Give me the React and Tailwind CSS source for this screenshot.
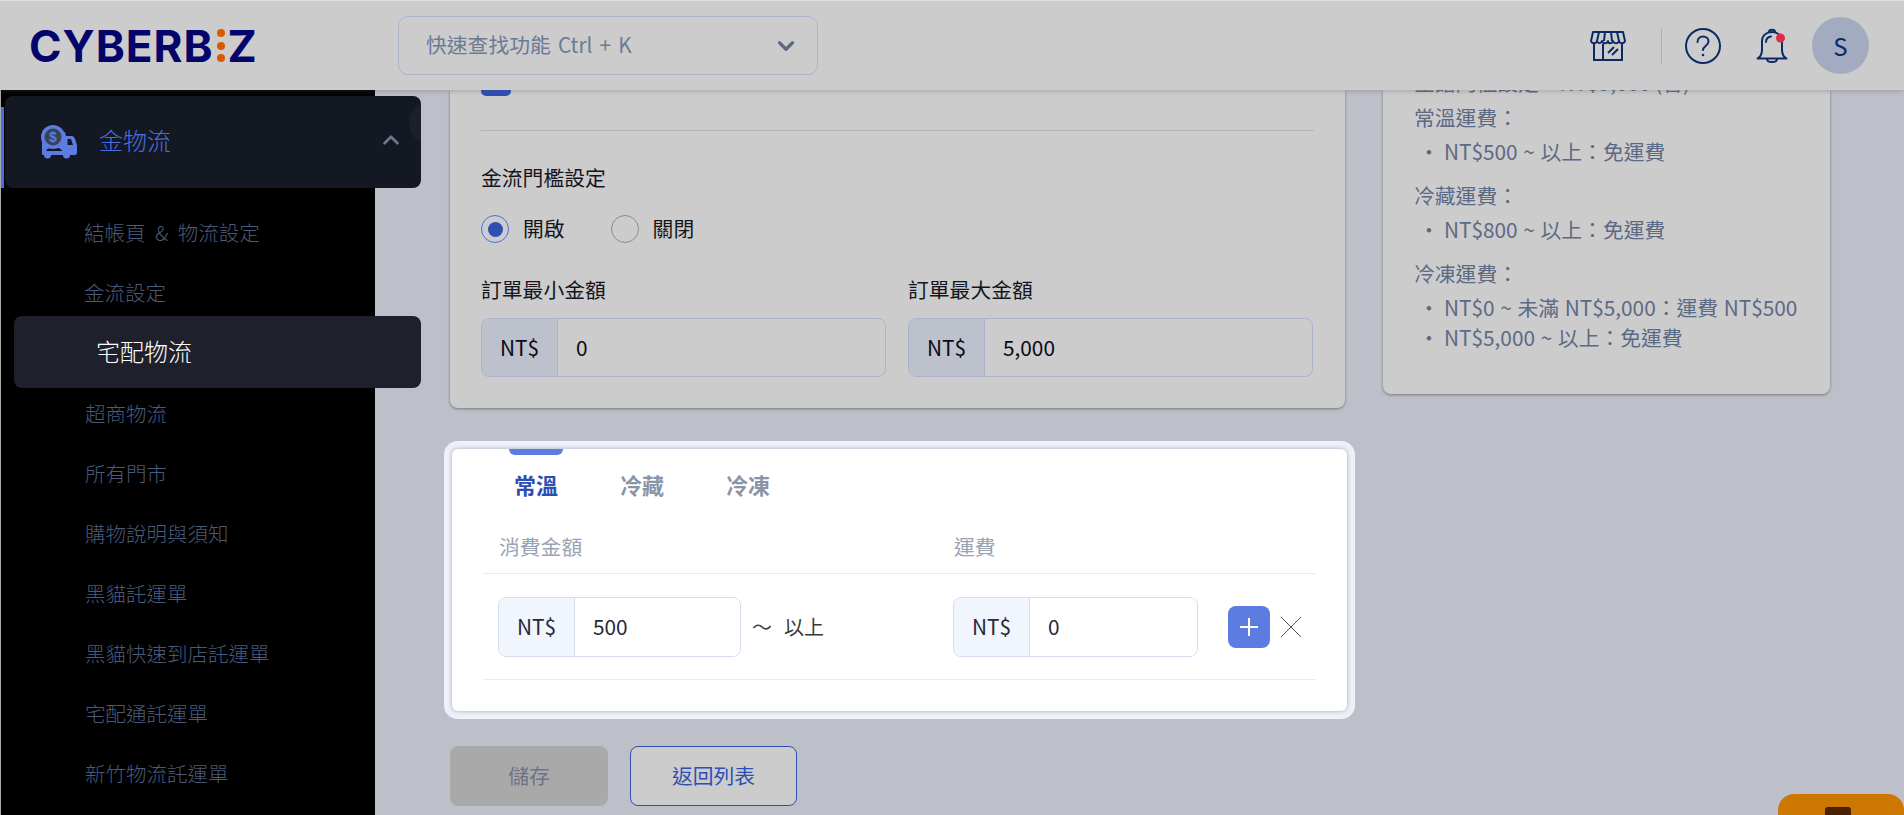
import React from "react";
import { ChevronDown, ChevronUp } from "lucide-react";

const sideItems = ["結帳頁 & 物流設定", "金流設定"];
const sideItemsBelow = [
  "超商物流",
  "所有門市",
  "購物說明與須知",
  "黑貓託運單",
  "黑貓快速到店託運單",
  "宅配通託運單",
  "新竹物流託運單",
];

const Logo = () => (
  <div className="flex items-center h-[33px] text-[#04056b] font-['Inter',sans-serif] font-bold text-[44px] leading-none tracking-[1px]">
    <span>CYBERB</span>
    <span className="flex flex-col justify-between h-[33px] w-[8px] mx-[3px]">
      <span className="w-[8px] h-[8px] rounded-full bg-[#d95b00]" />
      <span className="w-[8px] h-[8px] rounded-full bg-[#d95b00]" />
      <span className="w-[8px] h-[8px] rounded-full bg-[#d95b00]" />
    </span>
    <span>Z</span>
  </div>
);

const StoreIcon = () => (
  <svg width="36" height="32" viewBox="0 0 36 32" fill="none" stroke="#0c2a66" strokeWidth="2">
    <path d="M3 2h30l2 9c-1 3-5 3-6 0-1 3-5 3-6 0-1 3-5 3-5 0-1 3-5 3-6 0-1 3-4 3-5 0-1 3-5 3-6 0z" strokeLinejoin="round" />
    <path d="M9 2 7 11M15 2l-1 9M21 2l1 9M27 2l2 9" />
    <path d="M4 14v16h28V14M13 14v16" />
    <path d="m18 23 6-6M22 25l6-6" />
  </svg>
);

const HelpIcon = () => (
  <svg width="38" height="38" viewBox="0 0 38 38" fill="none" stroke="#0c2a66" strokeWidth="2">
    <circle cx="19" cy="19" r="17" />
    <path d="M13.500 15c0-3.500 2.500-5.500 5.500-5.500s5.500 2 5.500 5c0 4.500-5.500 4.500-5.500 8.500" strokeLinecap="round" />
    <circle cx="19" cy="28" r="1.300" fill="#0c2a66" stroke="none" />
  </svg>
);

const BellIcon = () => (
  <svg width="32" height="36" viewBox="0 0 32 36" fill="none" stroke="#0c2a66" strokeWidth="2">
    <path d="M13 4c0-3 6-3 6 0" />
    <path d="M6 22c0 4-2 7-4.500 8.500h29C28 29 26 26 26 22v-9c0-5-4-9-10-9S6 8 6 13z" strokeLinejoin="round" />
    <path d="M10 14c0-3 2-5 5-5.500" strokeLinecap="round" />
    <path d="M11 31c0 4 10 4 10 0" />
    <circle cx="24.500" cy="10" r="4.500" fill="#dc2f45" stroke="none" />
  </svg>
);

const TruckIcon = () => (
  <svg width="36" height="36" viewBox="0 0 36 36" className="shrink-0">
    <path d="M1 15c0-3 1-5 3-7h20l1 4h6c1 0 2 1 3 3l2 6v8c0 1-1 2-2 2H2c-1 0-1-1-1-2z" fill="#5c7ce2" />
    <path d="M26.500 15h3.500l2 6h-5.500z" fill="#141822" />
    <path d="M5 27c2-5 14-5 16 0z" fill="#141822" />
    <circle cx="12" cy="13" r="12" fill="#5c7ce2" />
    <circle cx="12" cy="13" r="8.500" fill="#3b4256" />
    <text x="12" y="18" textAnchor="middle" fontSize="14" fontWeight="700" fill="#5c7ce2" fontFamily="Liberation Sans, sans-serif">$</text>
    <circle cx="6.500" cy="31" r="3.500" fill="#5c7ce2" />
    <circle cx="25.500" cy="31" r="3.500" fill="#5c7ce2" />
  </svg>
);

const Sidebar = () => (
  <aside className="relative z-10 w-[375px] shrink-0 bg-black border-l border-[#a9a9a9] pt-[6px] text-[20.5px] text-[#4a5a7a] font-light">
    <div className="absolute left-0 top-[17px] w-[3px] h-[81px] bg-[#4a6fe0]" />
    <div className="relative overflow-hidden flex items-center ml-[4px] w-[416px] h-[92px] bg-[#141822] rounded-lg pl-[36px] pr-[16px]">
      <div className="absolute left-[404px] top-[5px] w-[44px] h-[44px] rounded-full bg-[#1c202a]" />
      <TruckIcon />
      <span className="ml-[22px] flex-1 -mt-[4px] text-[24px] text-[#4a6fe0]">金物流</span>
      <ChevronUp size={26} strokeWidth={2.5} className="text-[#6f7788] -mt-[4px] mr-[1px]" />
    </div>
    <div className="mt-[14px]">
      {sideItems.map((item) => (
        <div key={item} className="h-[60px] flex items-center pl-[83px] [word-spacing:5px]">
          {item}
        </div>
      ))}
      <div className="relative flex items-center ml-[13px] -mt-[6px] -mb-[5px] w-[407px] h-[72px] bg-[#1e212c] rounded-lg pl-[82px] text-[24px] text-white">
        <span className="-mt-[2px]">宅配物流</span>
      </div>
      {sideItemsBelow.map((item) => (
        <div key={item} className="h-[60px] flex items-center pl-[84px]">
          {item}
        </div>
      ))}
    </div>
  </aside>
);

const Radio = ({ checked, label }) => (
  <div className="flex items-center h-[28px]">
    <span
      className={
        checked
          ? "w-[28px] h-[28px] rounded-full border border-[#4a6fe0] flex items-center justify-center"
          : "w-[28px] h-[28px] rounded-full border border-[#858b99]"
      }
    >
      {checked && <span className="w-[15px] h-[15px] rounded-full bg-[#2f4fb5]" />}
    </span>
    <span className="ml-[14px] text-[#14141c]">{label}</span>
  </div>
);

const DimInput = ({ value }) => (
  <div className="flex h-[59px] rounded-lg border border-[#a9b4cc] overflow-hidden">
    <span className="w-[76px] shrink-0 flex items-center justify-center bg-[#bdc1cb] border-r border-[#a9b4cc] text-[#0a0a14]">
      NT$
    </span>
    <input readOnly value={value} className="flex-1 min-w-0 pl-[18px] bg-transparent text-[#0a0a14] outline-none" />
  </div>
);

const LightInput = ({ value, className }) => (
  <div className={`flex h-[60px] rounded-lg border border-[#d5dcee] overflow-hidden ${className}`}>
    <span className="w-[76px] shrink-0 flex items-center justify-center bg-[#f1f5fd] border-r border-[#d5dcee] text-[#262b38]">
      NT$
    </span>
    <input readOnly value={value} className="flex-1 min-w-0 pl-[18px] bg-white text-[#262b38] outline-none" />
  </div>
);

const ThresholdCard = () => (
  <section className="h-[318px] bg-[#cccccc] rounded-b-lg shadow-[0_1px_3px_rgba(60,60,70,0.55)] px-[31px]">
    <div className="w-[30px] h-[6px] bg-[#2f4fb5] rounded-b-[5px]" />
    <div className="mt-[34px] border-t border-[#b3b3b5]" />
    <h3 className="mt-[31px] leading-[30px] text-[#14141c]">金流門檻設定</h3>
    <div className="mt-[23px] flex gap-[46px]">
      <Radio checked label="開啟" />
      <Radio label="關閉" />
    </div>
    <div className="mt-[31px] mr-[1px] grid grid-cols-2 gap-x-[22px]">
      <div>
        <div className="leading-[30px] text-[#14141c]">訂單最小金額</div>
        <div className="mt-[14px]">
          <DimInput value="0" />
        </div>
      </div>
      <div>
        <div className="leading-[30px] text-[#14141c]">訂單最大金額</div>
        <div className="mt-[14px]">
          <DimInput value="5,000" />
        </div>
      </div>
    </div>
  </section>
);

const tabs = ["常溫", "冷藏", "冷凍"];

const ShippingPanel = () => (
  <section className="relative ml-[2px] mr-[-2px] mt-[41px] h-[262px] bg-white rounded-md shadow-[0_0_4px_rgba(70,75,95,0.45),0_0_0_8px_#eef1f9]">
    <div className="flex gap-[52px] ml-[57px]">
      {tabs.map((tab, i) => (
        <div key={tab} className="w-[54px] text-center">
          <div className={i === 0 ? "h-[6px] bg-[#5c7ce2] rounded-b-[6px]" : "h-[6px]"} />
          <div
            className={
              i === 0
                ? "mt-[14px] leading-[30px] text-[22px] font-bold text-[#2d4fb5]"
                : "mt-[14px] leading-[30px] text-[22px] font-bold text-[#8a94a8]"
            }
          >
            {tab}
          </div>
        </div>
      ))}
    </div>
    <div className="ml-[31px] w-[833px] mt-[32px]">
      <div className="grid grid-cols-[455px_1fr] pl-[16px] pb-[12px] border-b border-[#e6eaf5] leading-[30px] text-[#9aa3b5]">
        <span>消費金額</span>
        <span>運費</span>
      </div>
      <div className="flex items-center pl-[15px] pt-[23px] pb-[22px] border-b border-[#e6eaf5]">
        <LightInput value="500" className="w-[243px]" />
        <span className="ml-[11px] text-[#444] text-[20px] leading-none">～</span>
        <span className="ml-[12px] w-[169px] text-[20px] text-[#3a3a3a]">以上</span>
        <LightInput value="0" className="w-[245px]" />
        <button className="ml-[30px] w-[42px] h-[42px] rounded-lg bg-[#5c7ce2] flex items-center justify-center">
          <svg width="20" height="20" viewBox="0 0 20 20" stroke="#fff" strokeWidth="2">
            <path d="M10 1v18M1 10h18" />
          </svg>
        </button>
        <svg className="ml-[11px]" width="20" height="20" viewBox="0 0 20 20" stroke="#4d5566" strokeWidth="1">
          <path d="m0 0 20 20M20 0 0 20" />
        </svg>
      </div>
    </div>
  </section>
);

const FeeBlock = ({ title, lines }) => (
  <div className="mt-[14px] first:mt-[5px]">
    <div className="leading-[30px]">{title}</div>
    <ul className="mt-[4px]">
      {lines.map((line) => (
        <li key={line} className="flex leading-[30px] [word-spacing:1px]">
          <span className="w-[30px] text-center">・</span>
          {line}
        </li>
      ))}
    </ul>
  </div>
);

const SummaryCard = () => (
  <section className="w-[447px] h-[304px] bg-[#cccccc] rounded-b-lg shadow-[0_1px_3px_rgba(60,60,70,0.55)] pl-[31px] text-[#5b6a85]">
    <div className="-mt-[23px] leading-[30px]">全館門檻設定：NT$5,000 (含)</div>
    <div>
      <FeeBlock title="常溫運費：" lines={["NT$500 ~ 以上：免運費"]} />
      <FeeBlock title="冷藏運費：" lines={["NT$800 ~ 以上：免運費"]} />
      <FeeBlock title="冷凍運費：" lines={["NT$0 ~ 未滿 NT$5,000：運費 NT$500", "NT$5,000 ~ 以上：免運費"]} />
    </div>
  </section>
);

const App = () => {
  return (
    <div className="relative h-screen overflow-hidden flex flex-col bg-[#bdc0c9] font-['Noto_Sans_CJK_TC',sans-serif] text-[20.8px]">
      {/* top bar */}
      <header className="relative z-20 h-[90px] shrink-0 flex items-center bg-[#cccccc] border-t border-[#dedede] shadow-[0_1px_5px_rgba(80,80,90,0.3)]">
        <div className="ml-[29px] w-[369px]">
          <Logo />
        </div>
        <div className="w-[420px] h-[59px] flex items-center justify-between rounded-[10px] border border-[#a9b4cc] pl-[27px] pr-[18px] text-[#6b7a95]">
          <span className="-mt-[2px] [word-spacing:2.5px]">快速查找功能 Ctrl + K</span>
          <ChevronDown size={26} strokeWidth={3} className="text-[#5d6a82]" />
        </div>
        <div className="ml-auto flex items-center mr-[35px]">
          <StoreIcon />
          <div className="w-px h-[36px] bg-[#a9b0bf] ml-[35px] mr-[22px]" />
          <HelpIcon />
          <div className="ml-[34px]">
            <BellIcon />
          </div>
          <div className="ml-[24px] w-[57px] h-[57px] rounded-full bg-[#a2abc0] flex items-center justify-center text-[24px] text-[#0c2a66]">
            S
          </div>
        </div>
      </header>

      <div className="flex flex-1 min-h-0">
        <Sidebar />
        <main className="flex-1 overflow-hidden flex items-start gap-[38px] pl-[75px]">
          <div className="w-[895px] shrink-0 pb-[10px]">
            <ThresholdCard />
            <ShippingPanel />
            <div className="mt-[35px] flex gap-[22px]">
              <button className="w-[158px] h-[60px] rounded-lg bg-[#aaa9aa] text-[#6d7585]">儲存</button>
              <button className="w-[167px] h-[60px] rounded-lg bg-[#cccccc] border border-[#2f4fb5] text-[#2f4fb5]">
                返回列表
              </button>
            </div>
          </div>
          <SummaryCard />
        </main>
      </div>

      <div className="absolute right-0 bottom-0 w-[126px] h-[21px] bg-[#cc7700] rounded-t-[16px] flex justify-center pt-[13px]">
        <span className="w-[26px] h-[8px] bg-[#4a2000] rounded-t-[3px] -ml-[6px]" />
      </div>
    </div>
  );
};

export default App;
